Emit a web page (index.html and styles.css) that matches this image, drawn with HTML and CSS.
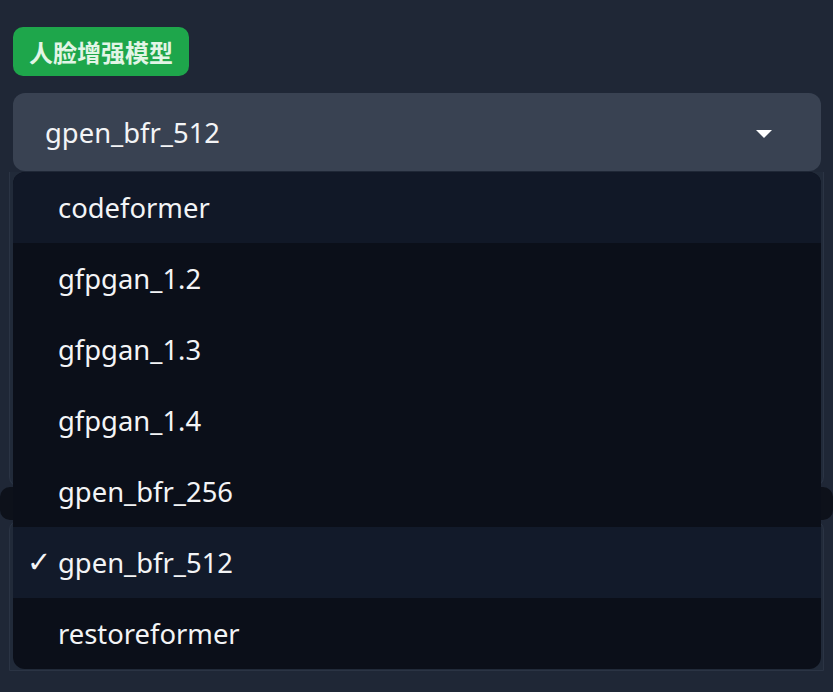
FILE: index.html
```html
<!DOCTYPE html>
<html lang="zh">
<head>
<meta charset="utf-8">
<link rel="stylesheet" href="styles.css">
</head>
<body>
<div class="wrap">
  <span class="badge">人脸增强模型</span>
  <div class="field">
    <div class="select">
      <span class="value">gpen_bfr_512</span>
      <span class="caret"></span>
    </div>
    <ul class="menu">
      <li class="item active">codeformer</li>
      <li class="item">gfpgan_1.2</li>
      <li class="item">gfpgan_1.3</li>
      <li class="item">gfpgan_1.4</li>
      <li class="item">gpen_bfr_256</li>
      <li class="item selected"><span class="check">✓</span>gpen_bfr_512</li>
      <li class="item">restoreformer</li>
    </ul>
  </div>
  <div class="panel first"></div>
  <div class="bar"></div>
  <div class="panel second"></div>
</div>
</body>
</html>
```
FILE: styles.css
```css
html, body {
  margin: 0;
  padding: 0;
  background: #1f2736;
  height: 100%;
  overflow: hidden;
}
.wrap {
  padding: 27px 12px 0 13px;
  font-family: "Noto Sans", "Open Sans", sans-serif;
  display: flex;
  flex-direction: column;
  align-items: flex-start;
}
.badge {
  display: inline-block;
  height: 49px;
  line-height: 49px;
  padding: 0 16px;
  background: #1ea64b;
  color: #e2f5e6;
  border-radius: 10px;
  font-family: "Noto Sans CJK SC", sans-serif;
  font-weight: 700;
  font-size: 24px;
}
.field {
  position: relative;
  align-self: stretch;
  margin-top: 17px;
  z-index: 2;
}
.select {
  height: 78px;
  background: #394252;
  border-radius: 12px;
  display: flex;
  align-items: center;
  justify-content: space-between;
  padding: 0 49px 0 32px;
  color: #f3f4f6;
  font-size: 27.4px;
}
.caret {
  width: 0;
  height: 0;
  border-left: 8px solid transparent;
  border-right: 8px solid transparent;
  border-top: 8px solid #ffffff;
  margin-top: 3px;
}
.menu {
  position: absolute;
  top: 79px;
  left: 0;
  right: 0;
  margin: 0;
  padding: 0;
  list-style: none;
  background: #0b0f19;
  border-radius: 12px;
  overflow: hidden;
}
.item {
  position: relative;
  height: 71px;
  line-height: 71px;
  padding-left: 45px;
  color: #f3f4f6;
  font-size: 27.4px;
}
.item.active {
  background: #111827;
}
.item.selected {
  background: #121a2a;
}
.check {
  position: absolute;
  left: 14px;
  top: 0;
  font-family: "DejaVu Sans", sans-serif;
  font-size: 29px;
  font-weight: 300;
}
.panel {
  align-self: stretch;
  margin: 0 -3px 0 -4px;
  border: 1px solid #2b3444;
  background: #212a39;
}
.panel.first {
  height: 314px;
  border-top: none;
  border-radius: 0 0 10px 10px;
  margin-top: 1px;
}
.bar {
  align-self: stretch;
  margin: 0 -12px 0 -13px;
  height: 33px;
  background: #0d111a;
  border-radius: 10px;
}
.panel.second {
  height: 149px;
  border-radius: 10px 10px 0 0;
}
```
